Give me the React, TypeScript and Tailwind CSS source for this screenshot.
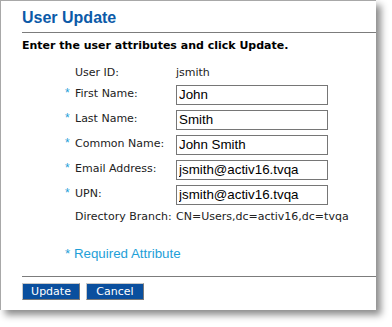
const LABEL_FONT = "font-['DejaVu_Sans',Verdana,sans-serif]";

type Row = { label: string; value: string; required?: boolean; input?: boolean };

const rows: Row[] = [
  { label: "First Name:", value: "John", required: true, input: true },
  { label: "Last Name:", value: "Smith", required: true, input: true },
  { label: "Common Name:", value: "John Smith", required: true, input: true },
  { label: "Email Address:", value: "jsmith@activ16.tvqa", required: true, input: true },
  { label: "UPN:", value: "jsmith@activ16.tvqa", required: true, input: true },
];

function Asterisk() {
  return <span className="text-[#1ea0d8] text-[12px] leading-none -mt-[3px] font-['Liberation_Sans',Arial,sans-serif]">*</span>;
}

function Button({ children }: { children: string }) {
  return (
    <button
      className={`h-[17px] w-[58px] bg-[#0a4f9e] text-white text-[11px] leading-none border border-t-[#c8c8c8] border-l-[#c8c8c8] border-b-[#7a7a7a] border-r-[#7a7a7a] ${LABEL_FONT}`}
    >
      {children}
    </button>
  );
}

export default function App() {
  return (
    <div className="w-[392px] h-[327px] bg-white overflow-hidden">
      <div className="w-[376px] h-[310px] bg-white border-l border-t border-[#a8a8a8] shadow-[5px_5px_7px_rgba(0,0,0,0.45)] pl-[21px] flex flex-col">
        <div className="pt-[7px] pb-[4px] border-b border-[#7c7c7c]">
          <h1 className="text-[16px] leading-[20px] font-bold text-[#0b5aa8] font-['Liberation_Sans',Arial,sans-serif]">
            User Update
          </h1>
        </div>

        <p className={`mt-[6px] text-[11px] leading-[14px] font-bold text-black ${LABEL_FONT}`}>
          Enter the user attributes and click Update.
        </p>

        <div className={`mt-[12px] pl-[43px] grid grid-cols-[10px_101px_1fr] text-[11px] text-[#222] ${LABEL_FONT}`}>
          <span />
          <span className="h-[17px] flex items-center">User ID:</span>
          <span className="h-[17px] flex items-center">jsmith</span>

          {rows.map((r) => (
            <div key={r.label} className="contents">
              <span className="h-[25px] flex items-center">{r.required && <Asterisk />}</span>
              <span className="h-[25px] flex items-center">{r.label}</span>
              <span className="h-[25px] flex items-center">
                <input
                  readOnly
                  value={r.value}
                  className="w-[152px] h-[20px] border border-[#767676] px-[2px] text-[13.33px] text-black font-['Liberation_Sans',Arial,sans-serif] outline-none"
                />
              </span>
            </div>
          ))}

          <span />
          <span className="h-[21px] flex items-center">Directory Branch:</span>
          <span className="h-[21px] flex items-center whitespace-nowrap">CN=Users,dc=activ16,dc=tvqa</span>
        </div>

        <p className="mt-[17px] pl-[43px] text-[13.33px] leading-[17px] text-[#1ea0d8] font-['Liberation_Sans',Arial,sans-serif]">
          * Required Attribute
        </p>

        <div className="mt-[14px] border-t border-[#7c7c7c] pt-[6px] flex gap-[6px]">
          <Button>Update</Button>
          <Button>Cancel</Button>
        </div>
      </div>
    </div>
  );
}
